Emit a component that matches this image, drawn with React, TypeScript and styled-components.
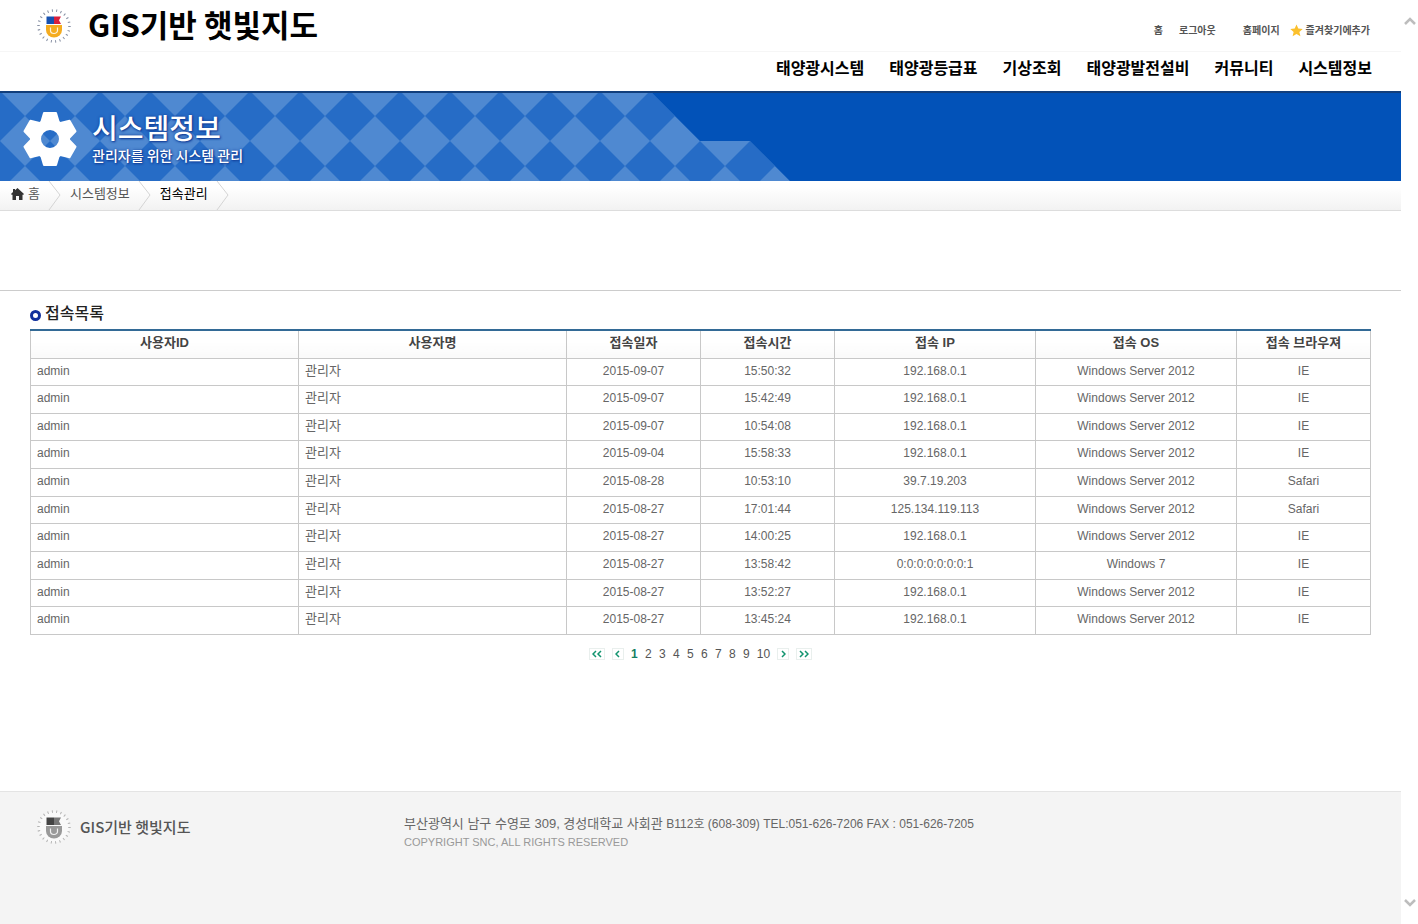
import React from "react";
import styled, { createGlobalStyle } from "styled-components";

const GlobalStyle = createGlobalStyle`
  *, *::before, *::after { box-sizing: border-box; }
  body {
    margin: 0;
    background: #fff;
    color: #666;
    font-family: "Liberation Sans", "Noto Sans CJK KR", sans-serif;
    font-size: 12px;
    line-height: 18px;
  }
  a { color: inherit; text-decoration: none; }
  button { font: inherit; color: inherit; background: none; border: 0; padding: 0; cursor: pointer; }
  h1, h2, p, ul, ol { margin: 0; padding: 0; }
  ul, ol { list-style: none; }
`;

const korean = `"Noto Sans CJK KR", sans-serif`;

const Shell = styled.div`
  display: flex;
  min-height: 100vh;
`;

const Page = styled.div`
  flex: 1;
  min-width: 0;
  display: flex;
  flex-direction: column;
`;

const ScrollRail = styled.div`
  position: sticky;
  top: 0;
  width: 17px;
  height: 100vh;
  padding: 16px 2px;
  display: flex;
  flex-direction: column;
  justify-content: space-between;
`;

const ScrollButton = styled.button`
  display: flex;
  justify-content: center;
  height: 10px;
`;

const TopBar = styled.header`
  display: flex;
  justify-content: space-between;
  align-items: center;
  height: 52px;
  padding: 0 31px 0 36px;
  border-bottom: 1px solid #f6f6f6;
`;

const Brand = styled.a<{ $small?: boolean }>`
  display: flex;
  align-items: center;
  gap: ${(p) => (p.$small ? 8 : 16)}px;
  font-family: ${korean};
  font-size: ${(p) => (p.$small ? 15 : 31)}px;
  font-weight: ${(p) => (p.$small ? 500 : 700)};
  line-height: ${(p) => (p.$small ? 36 : 32)}px;
  color: ${(p) => (p.$small ? "#555" : "#000")};
  white-space: nowrap;

  span { padding-bottom: ${(p) => (p.$small ? 0 : 4)}px; }
`;

const UtilityList = styled.ul`
  display: flex;
  align-items: center;
  padding-top: 10px;
  font-size: 10px;
  font-weight: 700;
  line-height: 14px;
  color: #555;
`;

const UtilityItem = styled.li<{ $gap?: number }>`
  margin-left: ${(p) => p.$gap ?? 0}px;

  a {
    display: flex;
    align-items: center;
    gap: 3px;
  }
`;

const MainNav = styled.nav`
  height: 39px;
  padding-right: 29px;

  ul {
    display: flex;
    justify-content: flex-end;
    gap: 25px;
    padding-top: 5px;
    font-size: 16px;
    font-weight: 700;
    line-height: 24px;
    color: #000;
    white-space: nowrap;
  }
`;

const Banner = styled.section`
  display: grid;
  height: 90px;
  overflow: hidden;
  border-top: 2px solid #123f7c;
  background: #0252b8;

  > * { grid-area: 1 / 1; }
`;

const BannerContent = styled.div`
  z-index: 1;
  display: flex;
  align-items: center;
  gap: 14px;
  padding: 4px 0 0 22px;
  font-family: ${korean};
  color: #fff;
  text-shadow: 0 0 3px #123c96, 1px 1px 2px #123c96;

  h1 {
    font-size: 28px;
    font-weight: 500;
    line-height: 32px;
  }

  p {
    font-size: 14px;
    font-weight: 500;
    line-height: 24px;
  }
`;

const Breadcrumb = styled.nav`
  height: 30px;
  border-bottom: 1px solid #ddd;
  background: linear-gradient(#fff 20%, #f2f2f2);

  ol {
    display: flex;
    padding-left: 11px;
  }
`;

const Crumb = styled.li<{ $current?: boolean }>`
  display: flex;
  align-items: flex-start;
  font-size: 13px;
  line-height: 26px;
  color: ${(p) => (p.$current ? "#000" : "#555")};

  a {
    display: flex;
    align-items: center;
    gap: 4px;
    padding-right: 8px;
  }

  > svg { margin-right: 9px; }
`;

const SearchArea = styled.div`
  height: 80px;
  border-bottom: 1px solid #ccc;
`;

const Content = styled.main`
  padding: 12px 30px 128px;
`;

const SectionTitle = styled.h2`
  display: flex;
  align-items: center;
  gap: 4px;
  height: 26px;
  padding-bottom: 4px;
  font-size: 16px;
  font-weight: 500;
  line-height: 20px;
  color: #222;

  &::before {
    content: "";
    width: 11px;
    height: 11px;
    margin-top: 2px;
    border: 3px solid #102f9c;
    border-radius: 50%;
  }
`;

const LogTable = styled.table`
  width: 100%;
  height: 306px;
  table-layout: fixed;
  border-collapse: collapse;

  th, td {
    border: 1px solid #c8c8c8;
    vertical-align: top;
    white-space: nowrap;
  }

  th {
    height: 28px;
    padding: 2px 6px 0;
    border-top: 2px solid #336a96;
    font-size: 13px;
    font-weight: 700;
    line-height: 20px;
    color: #444;
    background: linear-gradient(#fff 40%, #f9f9f9);
  }

  td { padding: 2px 6px 0; }
`;

const Cell = styled.td<{ $left?: boolean; $korean?: boolean }>`
  text-align: ${(p) => (p.$left ? "left" : "center")};
  font-size: ${(p) => (p.$korean ? 13 : 12)}px;
  line-height: 20px;
`;

const Pagination = styled.nav`
  display: flex;
  justify-content: center;
  align-items: center;
  gap: 7px;
  padding-top: 10px;
  line-height: 18px;
  color: #555;
`;

const PageButton = styled.button<{ $current?: boolean }>`
  min-width: 7px;
  font-weight: ${(p) => (p.$current ? 700 : 400)};
  color: ${(p) => (p.$current ? "#147f63" : "inherit")};
`;

const ArrowButton = styled.button<{ $wide?: boolean }>`
  display: flex;
  align-items: center;
  justify-content: center;
  width: ${(p) => (p.$wide ? 16 : 12)}px;
  height: 12px;
  border: 1px solid #e9efed;
`;

const Footer = styled.footer`
  flex: 1;
  display: flex;
  align-items: flex-start;
  padding: 17px 36px;
  border-top: 1px solid #e4e4e4;
  background: #f4f4f4;
`;

const FooterBrand = styled.div`
  width: 368px;
`;

const Address = styled.address`
  padding-top: 6px;
  font-style: normal;
  font-size: 13px;
  line-height: 18px;
  color: #666;

  span { font-size: 12px; }

  small {
    display: block;
    font-size: 11px;
    color: #999;
  }
`;

function Emblem({ gray = false }: { gray?: boolean }) {
  const [blue, red, gold, ring] = gray
    ? ["#444", "#777", "#999", "#b4b4b4"]
    : ["#1651b0", "#d8203c", "#f4ac20", "#8790a4"];
  return (
    <svg width="36" height="36" viewBox="0 0 36 36" aria-hidden="true">
      <circle cx="18" cy="18" r="15.500" fill={gray ? "#f9f9f9" : "#fff"} stroke={ring} strokeWidth="2.500" strokeDasharray="1 3.400" />
      <path d="M10.500 8.500h7.500v7.500h-7.500z" fill={blue} />
      <path d="M18 8.500h7l-2 3.700 2 3.800h-7z" fill={red} />
      <path d="M10 17h16v5a8 7.500 0 0 1-16 0z" fill={gold} />
      <path d="M14.500 19.500v3a3.500 3 0 0 0 7 0v-3" fill="none" stroke="#fff" strokeWidth="1.200" opacity=".85" />
    </svg>
  );
}

function BannerPattern() {
  return (
    <svg width="790" height="88" viewBox="0 2 790 88" aria-hidden="true">
      <defs>
        <pattern id="diamonds" width="50" height="50" patternUnits="userSpaceOnUse">
          <path d="M0 0h50v50H0z" fill="#266cc6" />
          <path d="M0 0h50L25 25zM0 50h50L25 25z" fill="#4f89d1" />
        </pattern>
      </defs>
      <path d="M0 0h650l50 50h50l40 40H0z" fill="url(#diamonds)" />
    </svg>
  );
}

function Gear() {
  return (
    <svg width="56" height="56" viewBox="-28 -28 56 56" aria-hidden="true">
      <g fill="#fff" stroke="#fff" strokeWidth="2" strokeLinejoin="round">
        <circle r="14.500" fill="none" strokeWidth="11" />
        {[0, 60, 120, 180, 240, 300].map((angle) => (
          <path key={angle} d="M-9-16L-6-26H6L9-16z" transform={`rotate(${angle})`} />
        ))}
      </g>
    </svg>
  );
}

function CrumbArrow() {
  return (
    <svg width="13" height="29" viewBox="0 0 13 29" fill="none" aria-hidden="true">
      <path d="M1 0l11 14L1 29" stroke="#d4d4d4" />
    </svg>
  );
}

function Chevrons({ count, back = false }: { count: 1 | 2; back?: boolean }) {
  const d = back ? "M4 1L1 4l3 3" : "M1 1l3 3-3 3";
  return (
    <svg width={count * 5} height="8" viewBox={`0 0 ${count * 5} 8`} fill="none" stroke="#12946f" strokeWidth="1.500" aria-hidden="true">
      <path d={d} />
      {count === 2 && <path d={d} transform="translate(5 0)" />}
    </svg>
  );
}

function ScrollArrow({ down = false }: { down?: boolean }) {
  return (
    <svg width="12" height="10" viewBox="0 0 12 10" fill="none" stroke="#bdbdbd" strokeWidth="2.500" aria-hidden="true">
      <path d={down ? "M1 2l5 5 5-5" : "M1 8l5-5 5 5"} />
    </svg>
  );
}

const menu = ["태양광시스템", "태양광등급표", "기상조회", "태양광발전설비", "커뮤니티", "시스템정보"];

const columns = [
  { label: "사용자ID", width: "20%" },
  { label: "사용자명", width: "20%" },
  { label: "접속일자", width: "10%" },
  { label: "접속시간", width: "10%" },
  { label: "접속 IP", width: "15%" },
  { label: "접속 OS", width: "15%" },
  { label: "접속 브라우져", width: "10%" },
];

const server = "Windows Server 2012";

const logs = [
  ["2015-09-07", "15:50:32", "192.168.0.1", server, "IE"],
  ["2015-09-07", "15:42:49", "192.168.0.1", server, "IE"],
  ["2015-09-07", "10:54:08", "192.168.0.1", server, "IE"],
  ["2015-09-04", "15:58:33", "192.168.0.1", server, "IE"],
  ["2015-08-28", "10:53:10", "39.7.19.203", server, "Safari"],
  ["2015-08-27", "17:01:44", "125.134.119.113", server, "Safari"],
  ["2015-08-27", "14:00:25", "192.168.0.1", server, "IE"],
  ["2015-08-27", "13:58:42", "0:0:0:0:0:0:0:1", "Windows 7", "IE"],
  ["2015-08-27", "13:52:27", "192.168.0.1", server, "IE"],
  ["2015-08-27", "13:45:24", "192.168.0.1", server, "IE"],
];

const pages = [1, 2, 3, 4, 5, 6, 7, 8, 9, 10];

export default function App() {
  return (
    <>
      <GlobalStyle />
      <Shell>
        <Page>
          <TopBar>
            <Brand href="#">
              <Emblem />
              <span>GIS기반 햇빛지도</span>
            </Brand>
            <UtilityList>
              <UtilityItem><a href="#">홈</a></UtilityItem>
              <UtilityItem $gap={16}><a href="#">로그아웃</a></UtilityItem>
              <UtilityItem $gap={27}><a href="#">홈페이지</a></UtilityItem>
              <UtilityItem $gap={10}>
                <a href="#">
                  <svg width="13" height="13" viewBox="0 0 24 24" fill="#fbc02d" aria-hidden="true">
                    <path d="M12 1l3.300 7.500 8.200.8-6.200 5.400 1.900 8.100L12 18.500l-7.200 4.300 1.900-8.100L.5 9.300l8.200-.8z" />
                  </svg>
                  즐겨찾기에추가
                </a>
              </UtilityItem>
            </UtilityList>
          </TopBar>
          <MainNav>
            <ul>
              {menu.map((item) => (
                <li key={item}><a href="#">{item}</a></li>
              ))}
            </ul>
          </MainNav>
          <Banner>
            <BannerPattern />
            <BannerContent>
              <Gear />
              <div>
                <h1>시스템정보</h1>
                <p>관리자를 위한 시스템 관리</p>
              </div>
            </BannerContent>
          </Banner>
          <Breadcrumb>
            <ol>
              <Crumb>
                <a href="#">
                  <svg width="13" height="12" viewBox="0 0 13 12" fill="#333" aria-hidden="true">
                    <path d="M6.500 0L13 6l-1 1-.5-.4V12H8V8H5v4H1.500V6.600L1 7 0 6l2-1.900V1h2v1.300z" />
                  </svg>
                  홈
                </a>
                <CrumbArrow />
              </Crumb>
              <Crumb><a href="#">시스템정보</a><CrumbArrow /></Crumb>
              <Crumb $current><a href="#" aria-current="page">접속관리</a><CrumbArrow /></Crumb>
            </ol>
          </Breadcrumb>
          <SearchArea />
          <Content>
            <SectionTitle>접속목록</SectionTitle>
            <LogTable>
              <colgroup>
                {columns.map((c) => <col key={c.label} width={c.width} />)}
              </colgroup>
              <thead>
                <tr>{columns.map((c) => <th key={c.label} scope="col">{c.label}</th>)}</tr>
              </thead>
              <tbody>
                {logs.map((row) => (
                  <tr key={row[0] + row[1]}>
                    <Cell $left>admin</Cell>
                    <Cell $left $korean>관리자</Cell>
                    {row.map((value, i) => <Cell key={i}>{value}</Cell>)}
                  </tr>
                ))}
              </tbody>
            </LogTable>
            <Pagination>
              <ArrowButton $wide aria-label="처음"><Chevrons count={2} back /></ArrowButton>
              <ArrowButton aria-label="이전"><Chevrons count={1} back /></ArrowButton>
              {pages.map((n) => (
                <PageButton key={n} $current={n === 1}>{n}</PageButton>
              ))}
              <ArrowButton aria-label="다음"><Chevrons count={1} /></ArrowButton>
              <ArrowButton $wide aria-label="마지막"><Chevrons count={2} /></ArrowButton>
            </Pagination>
          </Content>
          <Footer>
            <FooterBrand>
              <Brand href="#" $small>
                <Emblem gray />
                <span>GIS기반 햇빛지도</span>
              </Brand>
            </FooterBrand>
            <Address>
              부산광역시 남구 수영로 309, 경성대학교 사회관{" "}
              <span>B112호 (608-309) TEL:051-626-7206 FAX : 051-626-7205</span>
              <small>COPYRIGHT SNC, ALL RIGHTS RESERVED</small>
            </Address>
          </Footer>
        </Page>
        <ScrollRail>
          <ScrollButton aria-label="위로"><ScrollArrow /></ScrollButton>
          <ScrollButton aria-label="아래로"><ScrollArrow down /></ScrollButton>
        </ScrollRail>
      </Shell>
    </>
  );
}
